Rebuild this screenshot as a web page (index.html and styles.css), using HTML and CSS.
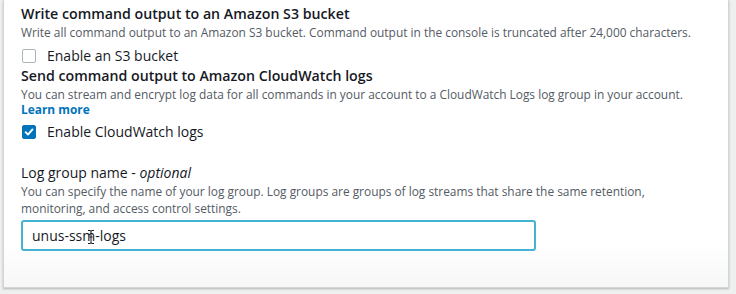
FILE: index.html
```html
<!DOCTYPE html>
<html>
<head>
<meta charset="utf-8">
<link rel="stylesheet" href="styles.css">
</head>
<body>
<div class="card">
  <div class="section">
    <div class="title">Write command output to an Amazon S3 bucket</div>
    <div class="desc">Write all command output to an Amazon S3 bucket. Command output in the console is truncated after 24,000 characters.</div>
    <label class="check-row first">
      <span class="box"></span>
      <span class="check-label">Enable an S3 bucket</span>
    </label>
  </div>
  <div class="section">
    <div class="title">Send command output to Amazon CloudWatch logs</div>
    <div class="desc tight">You can stream and encrypt log data for all commands in your account to a CloudWatch Logs log group in your account.<br><a class="link" href="#">Learn more</a></div>
    <label class="check-row second">
      <span class="box checked">
        <svg width="10" height="10" viewBox="0 0 10 10"><path d="M1.6 5.2 L4 7.6 L8.5 2.4" fill="none" stroke="#fff" stroke-width="1.9" stroke-linecap="round" stroke-linejoin="round"/></svg>
      </span>
      <span class="check-label">Enable CloudWatch logs</span>
    </label>
  </div>
  <div class="field">
    <div class="field-label">Log group name - <em>optional</em></div>
    <div class="desc field-desc">You can specify the name of your log group. Log groups are groups of log streams that share the same retention, monitoring, and access control settings.</div>
    <div class="input">
      <span class="value">unus-ssm-logs</span>
      <svg class="ibeam" width="8" height="16" viewBox="0 0 8 16"><path d="M1 1.5 H3 Q4 1.5 4 2.5 V13.5 Q4 14.5 3 14.5 H1 M7 1.5 H5 Q4 1.5 4 2.5 M4 13.5 Q4 14.5 5 14.5 H7 M2.5 8 H5.5" fill="none" stroke="#16191f" stroke-width="1"/></svg>
    </div>
  </div>
</div>
</body>
</html>
```
FILE: styles.css
```css
html, body {
  margin: 0;
  padding: 0;
}
body {
  background: #eef0f0;
  font-family: "Open Sans", "Liberation Sans", sans-serif;
  color: #16191f;
  width: 736px;
  height: 294px;
  overflow: hidden;
}
.card {
  margin-left: 3px;
  width: 726px;
  background: linear-gradient(#ffffff 85%, #f7f7f7 100%);
  border: 1px solid #d5d5d5;
  border-top: none;
  box-shadow: 0 1px 2px rgba(0,0,0,0.25);
  padding: 4px 0 37px 17px;
  box-sizing: border-box;
  height: 288px;
}
.title {
  font-size: 14.2px;
  font-weight: 600;
  line-height: 20px;
}
.desc {
  font-size: 11.9px;
  line-height: 16px;
  color: #545b64;
}
.desc.tight {
  line-height: 15px;
  margin-top: 1px;
}
.link {
  color: #0073bb;
  font-weight: 700;
  text-decoration: none;
}
.check-row {
  display: flex;
  align-items: center;
  gap: 11px;
  height: 20px;
}
.check-row.first {
  margin-top: 6px;
}
.check-row.second {
  margin-top: 5px;
}
.box {
  width: 14px;
  height: 14px;
  box-sizing: border-box;
  border: 1px solid #aab7b8;
  border-radius: 2px;
  background: #fff;
  display: flex;
  align-items: center;
  justify-content: center;
  margin-left: 1px;
}
.box.checked {
  background: #0073bb;
  border-color: #0073bb;
}
.check-label {
  font-size: 14px;
  line-height: 20px;
}
.field {
  margin-top: 21px;
}
.field-label {
  font-size: 14px;
  line-height: 20px;
}
.field-label em {
  font-style: italic;
}
.field-desc {
  line-height: 17px;
  max-width: 670px;
}
.input {
  position: relative;
  margin-top: 3px;
  width: 515px;
  height: 31px;
  box-sizing: border-box;
  border: 2px solid #44b3d3;
  border-radius: 3px;
  display: flex;
  align-items: center;
  padding-left: 9px;
  font-size: 14px;
  font-weight: 500;
}
.ibeam {
  position: absolute;
  left: 64px;
  top: 7px;
}
```
